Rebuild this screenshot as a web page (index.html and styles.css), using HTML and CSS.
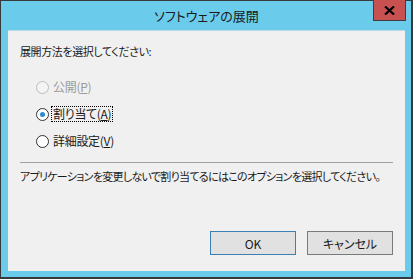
FILE: index.html
```html
<!DOCTYPE html>
<html lang="ja">
<head>
<meta charset="utf-8">
<title>ソフトウェアの展開</title>
<link rel="stylesheet" href="styles.css">
</head>
<body>
<div class="window">
  <div class="titlebar">
    <span class="title">ソフトウェアの展開</span>
    <button class="close" aria-label="閉じる">
      <svg width="11" height="9" viewBox="0 0 11 9"><path d="M1 0.5 L10 8.5 M10 0.5 L1 8.5" stroke="#000" stroke-width="2.2"/></svg>
    </button>
  </div>
  <div class="client">
    <div class="heading">展開方法を選択してください:</div>
    <div class="options">
      <label class="option disabled"><span class="radio"></span><span class="text">公開(<u>P</u>)</span></label>
      <label class="option"><span class="radio checked"></span><span class="text focus">割り当て(<u>A</u>)</span></label>
      <label class="option"><span class="radio"></span><span class="text">詳細設定(<u>V</u>)</span></label>
    </div>
    <div class="separator"></div>
    <div class="description">アプリケーションを変更しないで割り当てるにはこのオプションを選択してください。</div>
    <div class="buttons">
      <button class="btn default">OK</button>
      <button class="btn">キャンセル</button>
    </div>
  </div>
</div>
</body>
</html>
```

FILE: styles.css
```css
html, body {
  margin: 0;
  padding: 0;
}
body {
  font-family: "Noto Sans CJK JP", "Liberation Sans", sans-serif;
  font-size: 11px;
  color: #000;
  font-feature-settings: "palt";
}
.window {
  position: relative;
  width: 413px;
  height: 279px;
  box-sizing: border-box;
  background: #6acbea;
  border-style: solid;
  border-color: #363a3c;
  border-width: 1px 2px 2px 1px;
  display: flex;
  flex-direction: column;
}
.titlebar {
  height: 29px;
  display: flex;
  align-items: center;
  justify-content: center;
}
.title {
  font-size: 13px;
  line-height: 16px;
  color: #1a1a1a;
  margin-left: 1px;
  margin-top: 1px;
}
.close {
  position: absolute;
  top: -1px;
  right: 5px;
  width: 33px;
  height: 21px;
  box-sizing: border-box;
  border: 1px solid #3e3e3e;
  border-top: none;
  background: #c75050;
  padding: 0;
  display: flex;
  align-items: center;
  justify-content: center;
}
.client {
  flex: 1;
  margin: 0 6px 6px 7px;
  background: #f0f0f0;
  border-top: 1px solid #b9d9e6;
  display: flex;
  flex-direction: column;
  padding: 12px 12px 16px 12px;
}
.heading {
  line-height: 16px;
  color: #1a1a1a;
  letter-spacing: -0.4px;
}
.options {
  display: flex;
  flex-direction: column;
  gap: 11px;
  margin-top: 20px;
  margin-left: 16px;
}
.option {
  display: flex;
  align-items: center;
  height: 16px;
  line-height: 14px;
  color: #1a1a1a;
}
.option.disabled {
  color: #9a9a9a;
}
.radio {
  width: 11px;
  height: 11px;
  border: 1px solid #333;
  border-radius: 50%;
  background: #fff;
  position: relative;
  margin-right: 2px;
  flex: none;
}
.disabled .radio {
  border-color: #bcbcbc;
  background: #f4f4f4;
}
.radio.checked::after {
  content: "";
  position: absolute;
  left: 3px;
  top: 3px;
  width: 5px;
  height: 5px;
  border-radius: 50%;
  background: #2a8ad8;
}
.text {
  padding: 0 1px;
  border: 1px dotted transparent;
  font-size: 12px;
  letter-spacing: -0.3px;
}
.text.focus {
  border-color: #000;
}
u {
  text-decoration: underline;
  text-underline-offset: 1px;
}
.separator {
  height: 1px;
  background: #a0a0a0;
  margin-top: 13px;
}
.description {
  margin-top: 5px;
  line-height: 16px;
  color: #1a1a1a;
  letter-spacing: -0.7px;
  white-space: nowrap;
}
.buttons {
  margin-top: auto;
  display: flex;
  justify-content: flex-end;
  gap: 11px;
}
.btn {
  width: 86px;
  height: 24px;
  box-sizing: border-box;
  background: #e1e1e1;
  border: 1px solid #7a7a7a;
  font-family: "Noto Sans CJK JP", "Liberation Sans", sans-serif;
  font-size: 12px;
  font-feature-settings: "palt";
  color: #1a1a1a;
  padding: 0;
}
.btn.default {
  border-color: #3c7fb1;
}
```
